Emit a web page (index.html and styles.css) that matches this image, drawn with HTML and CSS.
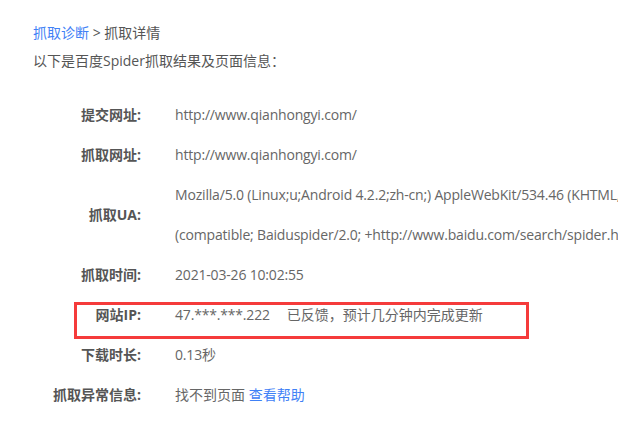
FILE: index.html
```html
<!DOCTYPE html>
<html lang="zh-CN">
<head>
  <meta charset="UTF-8">
  <title>抓取详情</title>
  <link rel="stylesheet" href="styles.css">
</head>
<body>

<div class="crumb">
  <a href="#">抓取诊断</a> &gt; 抓取详情
</div>
<div class="intro">以下是百度Spider抓取结果及页面信息：</div>

<div class="detail">
  <div class="row">
    <div class="label">提交网址:</div>
    <div class="value">http://www.qianhongyi.com/</div>
  </div>
  <div class="row">
    <div class="label">抓取网址:</div>
    <div class="value">http://www.qianhongyi.com/</div>
  </div>
  <div class="row">
    <div class="label">抓取UA:</div>
    <div class="value">
      <div class="ua-line">Mozilla/5.0 (Linux;u;Android 4.2.2;zh-cn;) AppleWebKit/534.46 (KHTML, like Gecko) Version/5.1 Mobile Safari/10600.6.3</div>
      <div class="ua-line">(compatible; Baiduspider/2.0; +http://www.baidu.com/search/spider.html)</div>
    </div>
  </div>
  <div class="row">
    <div class="label">抓取时间:</div>
    <div class="value">2021-03-26 10:02:55</div>
  </div>
  <div class="row marked">
    <div class="label">网站IP:</div>
    <div class="value">47.***.***.222<span class="zh note">已反馈，预计几分钟内完成更新</span></div>
  </div>
  <div class="row">
    <div class="label">下载时长:</div>
    <div class="value">0.13<span class="zh">秒</span></div>
  </div>
  <div class="row">
    <div class="label">抓取异常信息:</div>
    <div class="value"><span class="zh">找不到页面 <a href="#">查看帮助</a></span></div>
  </div>
</div>

</body>
</html>
```

FILE: styles.css
```css
html, body {
  overflow: hidden;
}
body {
  margin: 0;
  padding: 19px 0 0 33px;
  background: #fff;
  color: #666;
  font-family: "Open Sans", "Noto Sans CJK SC", sans-serif;
  font-size: 14px;
}
a {
  color: #3f81f6;
  text-decoration: none;
}
.crumb {
  line-height: 28px;
  color: #555;
}
.intro {
  line-height: 28px;
  color: #555;
}
.detail {
  margin-top: 20px;
}
.row {
  display: flex;
  align-items: center;
  position: relative;
}
.label {
  width: 108px;
  flex-shrink: 0;
  padding-right: 34px;
  text-align: right;
  font-weight: bold;
  color: #555;
  line-height: 40px;
}
.value {
  line-height: 40px;
  white-space: nowrap;
  letter-spacing: -0.18px;
}
.zh {
  letter-spacing: 0;
}
.ua-line {
  white-space: nowrap;
}
.note {
  margin-left: 17px;
}
.marked::after {
  content: "";
  position: absolute;
  left: 41px;
  right: 89px;
  top: 7px;
  bottom: -4px;
  border: 3px solid #f53b3b;
  pointer-events: none;
}
```
